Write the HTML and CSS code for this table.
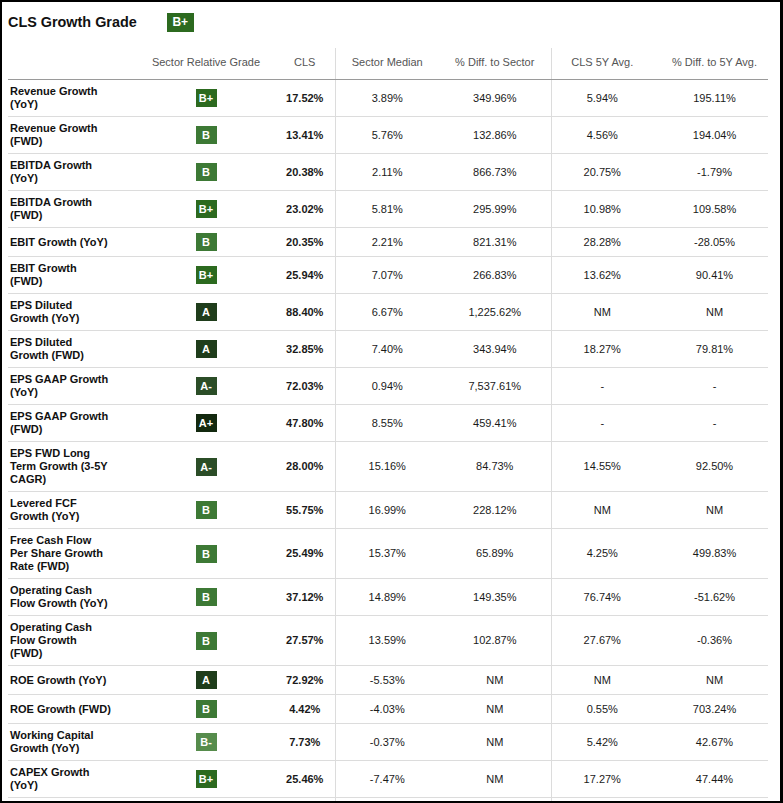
FILE: index.html
```html
<!DOCTYPE html>
<html lang="en">
<head>
<meta charset="utf-8">
<title>CLS Growth Grade</title>
<link rel="stylesheet" href="styles.css">
</head>
<body>
<div class="frame">
  <div class="title-row">
    <h1 class="title">CLS Growth Grade</h1>
    <span class="badge badge-title g-bp">B+</span>
  </div>
  <table class="grades">
    <colgroup>
      <col class="c-name"><col class="c-grade"><col class="c-cls"><col class="c-sm"><col class="c-diff"><col class="c-5y"><col class="c-5yd">
    </colgroup>
    <thead>
      <tr>
        <th></th>
        <th>Sector Relative Grade</th>
        <th>CLS</th>
        <th class="sep">Sector Median</th>
        <th>% Diff. to Sector</th>
        <th class="sep">CLS 5Y Avg.</th>
        <th class="last">% Diff. to 5Y Avg.</th>
      </tr>
    </thead>
    <tbody>
      <tr><td class="name"><div>Revenue Growth (YoY)</div></td><td><span class="badge g-bp">B+</span></td><td class="cls">17.52%</td><td class="sep">3.89%</td><td>349.96%</td><td class="sep">5.94%</td><td class="last">195.11%</td></tr>
      <tr><td class="name"><div>Revenue Growth (FWD)</div></td><td><span class="badge g-b">B</span></td><td class="cls">13.41%</td><td class="sep">5.76%</td><td>132.86%</td><td class="sep">4.56%</td><td class="last">194.04%</td></tr>
      <tr><td class="name"><div>EBITDA Growth (YoY)</div></td><td><span class="badge g-b">B</span></td><td class="cls">20.38%</td><td class="sep">2.11%</td><td>866.73%</td><td class="sep">20.75%</td><td class="last">-1.79%</td></tr>
      <tr><td class="name"><div>EBITDA Growth (FWD)</div></td><td><span class="badge g-bp">B+</span></td><td class="cls">23.02%</td><td class="sep">5.81%</td><td>295.99%</td><td class="sep">10.98%</td><td class="last">109.58%</td></tr>
      <tr><td class="name"><div>EBIT Growth (YoY)</div></td><td><span class="badge g-b">B</span></td><td class="cls">20.35%</td><td class="sep">2.21%</td><td>821.31%</td><td class="sep">28.28%</td><td class="last">-28.05%</td></tr>
      <tr><td class="name"><div>EBIT Growth (FWD)</div></td><td><span class="badge g-bp">B+</span></td><td class="cls">25.94%</td><td class="sep">7.07%</td><td>266.83%</td><td class="sep">13.62%</td><td class="last">90.41%</td></tr>
      <tr><td class="name"><div>EPS Diluted Growth (YoY)</div></td><td><span class="badge g-a">A</span></td><td class="cls">88.40%</td><td class="sep">6.67%</td><td>1,225.62%</td><td class="sep">NM</td><td class="last">NM</td></tr>
      <tr><td class="name"><div>EPS Diluted Growth (FWD)</div></td><td><span class="badge g-a">A</span></td><td class="cls">32.85%</td><td class="sep">7.40%</td><td>343.94%</td><td class="sep">18.27%</td><td class="last">79.81%</td></tr>
      <tr><td class="name"><div>EPS GAAP Growth (YoY)</div></td><td><span class="badge g-am">A-</span></td><td class="cls">72.03%</td><td class="sep">0.94%</td><td>7,537.61%</td><td class="sep">-</td><td class="last">-</td></tr>
      <tr><td class="name"><div>EPS GAAP Growth (FWD)</div></td><td><span class="badge g-ap">A+</span></td><td class="cls">47.80%</td><td class="sep">8.55%</td><td>459.41%</td><td class="sep">-</td><td class="last">-</td></tr>
      <tr><td class="name"><div>EPS FWD Long Term Growth (3-5Y CAGR)</div></td><td><span class="badge g-am">A-</span></td><td class="cls">28.00%</td><td class="sep">15.16%</td><td>84.73%</td><td class="sep">14.55%</td><td class="last">92.50%</td></tr>
      <tr><td class="name"><div>Levered FCF Growth (YoY)</div></td><td><span class="badge g-b">B</span></td><td class="cls">55.75%</td><td class="sep">16.99%</td><td>228.12%</td><td class="sep">NM</td><td class="last">NM</td></tr>
      <tr><td class="name"><div>Free Cash Flow Per Share Growth Rate (FWD)</div></td><td><span class="badge g-b">B</span></td><td class="cls">25.49%</td><td class="sep">15.37%</td><td>65.89%</td><td class="sep">4.25%</td><td class="last">499.83%</td></tr>
      <tr><td class="name"><div>Operating Cash Flow Growth (YoY)</div></td><td><span class="badge g-b">B</span></td><td class="cls">37.12%</td><td class="sep">14.89%</td><td>149.35%</td><td class="sep">76.74%</td><td class="last">-51.62%</td></tr>
      <tr><td class="name"><div>Operating Cash Flow Growth (FWD)</div></td><td><span class="badge g-b">B</span></td><td class="cls">27.57%</td><td class="sep">13.59%</td><td>102.87%</td><td class="sep">27.67%</td><td class="last">-0.36%</td></tr>
      <tr><td class="name"><div>ROE Growth (YoY)</div></td><td><span class="badge g-a">A</span></td><td class="cls">72.92%</td><td class="sep">-5.53%</td><td>NM</td><td class="sep">NM</td><td class="last">NM</td></tr>
      <tr><td class="name"><div>ROE Growth (FWD)</div></td><td><span class="badge g-b">B</span></td><td class="cls">4.42%</td><td class="sep">-4.03%</td><td>NM</td><td class="sep">0.55%</td><td class="last">703.24%</td></tr>
      <tr><td class="name"><div>Working Capital Growth (YoY)</div></td><td><span class="badge g-bm">B-</span></td><td class="cls">7.73%</td><td class="sep">-0.37%</td><td>NM</td><td class="sep">5.42%</td><td class="last">42.67%</td></tr>
      <tr><td class="name"><div>CAPEX Growth (YoY)</div></td><td><span class="badge g-bp">B+</span></td><td class="cls">25.46%</td><td class="sep">-7.47%</td><td>NM</td><td class="sep">17.27%</td><td class="last">47.44%</td></tr>
      <tr class="spacer"><td></td><td></td><td></td><td class="sep"></td><td></td><td class="sep"></td><td class="last"></td></tr>
    </tbody>
  </table>
</div>
</body>
</html>
```

FILE: styles.css
```css
* { box-sizing: border-box; }

html, body {
  margin: 0;
  padding: 0;
  background: #000;
}

.frame {
  width: 783px;
  height: 803px;
  overflow: hidden;
  background: #fff;
  border-style: solid;
  border-color: #000;
  border-width: 2px 3px 2px 2px;
  padding: 11px 0 0 6px;
  font-family: "Liberation Sans", Arial, sans-serif;
  color: #111;
}

.title-row {
  display: flex;
  align-items: center;
  height: 19px;
  margin-bottom: 16px;
}

.title {
  margin: 0;
  font-size: 14.4px;
  font-weight: bold;
  color: #111;
  line-height: 19px;
}

.badge {
  display: inline-block;
  width: 21px;
  height: 18px;
  line-height: 18px;
  text-align: center;
  color: #fff;
  font-weight: bold;
  font-size: 11px;
  vertical-align: middle;
}

.badge-title {
  width: 27px;
  height: 19px;
  line-height: 19px;
  font-size: 12px;
  margin-left: 30px;
}

.g-ap { background: #13290f; }
.g-a  { background: #1f3d1b; }
.g-am { background: #2b4d27; }
.g-bp { background: #2c6a1f; }
.g-b  { background: #3d7935; }
.g-bm { background: #568c4c; }

.grades {
  width: 760px;
  table-layout: fixed;
  border-collapse: collapse;
  font-size: 11px;
  line-height: 13px;
}

.c-name { width: 129px; }
.c-grade { width: 138px; }
.c-cls { width: 60px; }
.c-sm { width: 104px; }
.c-diff { width: 112px; }
.c-5y { width: 102px; }
.c-5yd { width: 115px; }

.grades th {
  font-weight: normal;
  color: #555;
  text-align: center;
  padding: 8px 0 10px;
  border-bottom: 1px solid #9a9a9a;
  white-space: nowrap;
}

.grades td {
  text-align: center;
  vertical-align: middle;
  padding: 5px 0;
  border-bottom: 1px solid #dcdcdc;
  color: #1a1a1a;
}

.grades .sep { border-left: 1px solid #dcdcdc; }
.grades .last { padding-left: 8px; }

.grades tr.spacer td {
  height: 12px;
  padding: 0;
  border-bottom: none;
}

.grades td.name {
  text-align: left;
  padding-left: 2px;
  font-weight: bold;
  color: #111;
}

.grades td.name div { width: 101.4px; }

.grades td.cls { font-weight: bold; }
```
